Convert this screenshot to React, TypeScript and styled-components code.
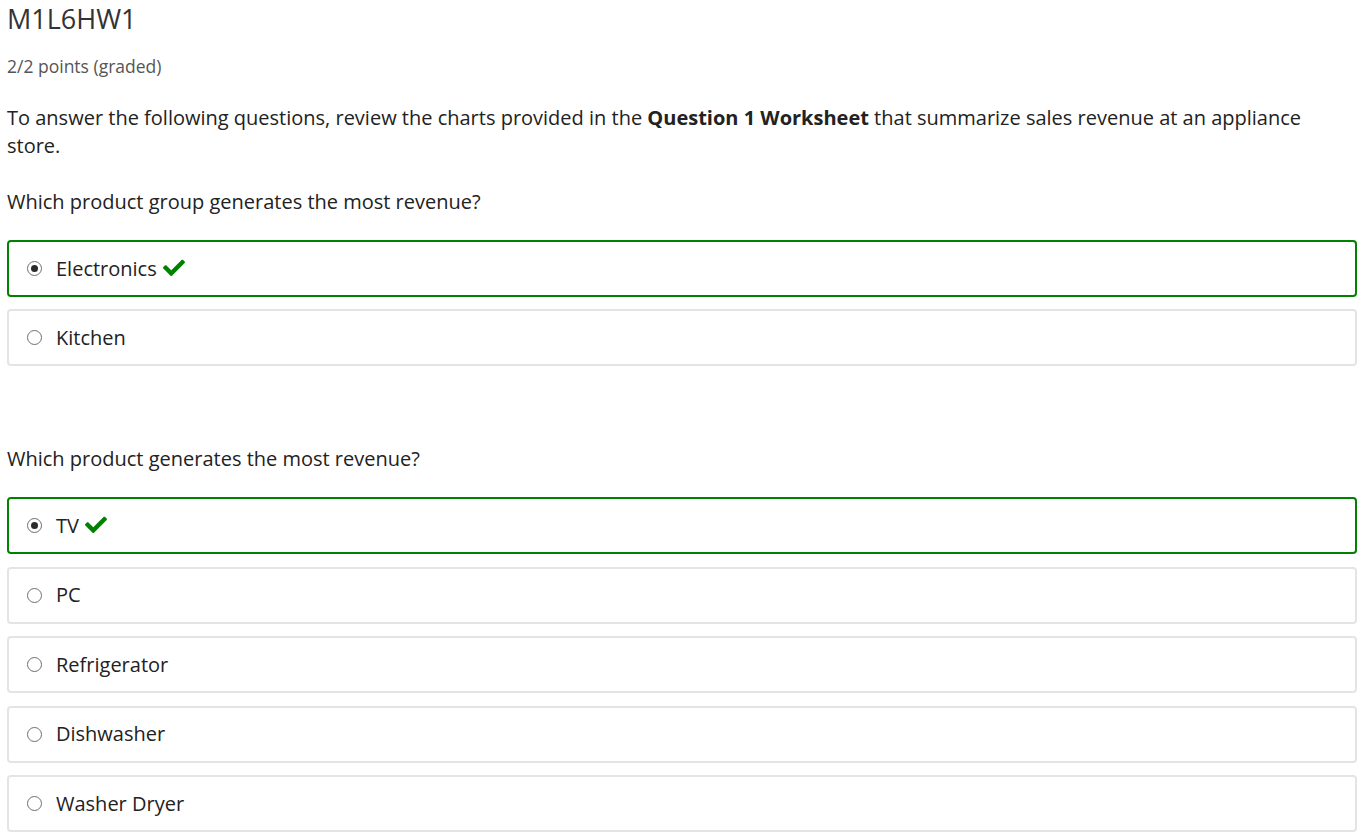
import React from "react";
import styled, { createGlobalStyle } from "styled-components";

const Global = createGlobalStyle`
  html, body { margin: 0; padding: 0; background: #fff; }
  body { font-family: "Open Sans", "Noto Sans", sans-serif; color: #222; }
`;

const Page = styled.div`
  padding: 0 13px 0 7px;
`;

const Title = styled.h2`
  margin: 0;
  padding-top: 2px;
  font-size: 27px;
  line-height: 34px;
  font-weight: 400;
  color: #333;
`;

const Points = styled.div`
  margin-top: 18px;
  font-size: 17.5px;
  line-height: 24px;
  color: #555;
`;

const Prose = styled.p`
  margin: 26px 0 0;
  font-size: 20px;
  line-height: 28px;
  color: #222;
  b { font-weight: 700; }
`;

const Question = styled.p<{ $top: number }>`
  margin: ${(p) => p.$top}px 0 0;
  font-size: 20px;
  line-height: 28px;
  color: #222;
`;

const Options = styled.div<{ $gap: number }>`
  margin-top: 24px;
  display: flex;
  flex-direction: column;
  gap: ${(p) => p.$gap}px;
`;

const Option = styled.label<{ $correct?: boolean }>`
  box-sizing: border-box;
  height: 57px;
  display: flex;
  align-items: center;
  padding-left: 18px;
  border: 2px solid ${(p) => (p.$correct ? "#008100" : "#e4e4e4")};
  border-radius: 4px;
  font-size: 20px;
  color: #222;
`;

const Radio = styled.span<{ $checked?: boolean }>`
  box-sizing: border-box;
  width: 15px;
  height: 15px;
  border-radius: 50%;
  border: 1.5px solid #6e6e6e;
  background: #fff;
  display: flex;
  align-items: center;
  justify-content: center;
  margin-right: 14px;
  flex: none;
  &::after {
    content: "";
    display: ${(p) => (p.$checked ? "block" : "none")};
    width: 7px;
    height: 7px;
    border-radius: 50%;
    background: #2a2a2a;
  }
`;

const Label = styled.span`
  line-height: 28px;
`;

const Check = styled.svg`
  width: 22px;
  height: 18px;
  margin-left: 6px;
  margin-top: -2px;
  fill: #008100;
`;

const CheckIcon = () => (
  <Check viewBox="0 0 512 420">
    <path
      transform="translate(0,-50)"
      d="M173.898 439.404l-166.4-166.4c-9.997-9.997-9.997-26.206 0-36.204l36.203-36.204c9.997-9.998 26.207-9.998 36.204 0L192 312.69 432.095 72.596c9.997-9.997 26.207-9.997 36.204 0l36.203 36.204c9.997 9.997 9.997 26.206 0 36.204l-294.4 294.401c-9.998 9.997-26.207 9.997-36.204-.001z"
    />
  </Check>
);

type Opt = { label: string; checked?: boolean };

const OptionList = ({ items, gap }: { items: Opt[]; gap: number }) => (
  <Options $gap={gap}>
    {items.map((o) => (
      <Option key={o.label} $correct={o.checked}>
        <Radio $checked={o.checked} />
        <Label>{o.label}</Label>
        {o.checked && <CheckIcon />}
      </Option>
    ))}
  </Options>
);

export default function App() {
  return (
    <>
      <Global />
      <Page>
        <Title>M1L6HW1</Title>
        <Points>2/2 points (graded)</Points>
        <Prose>
          To answer the following questions, review the charts provided in the{" "}
          <b>Question 1 Worksheet</b> that summarize sales revenue at an appliance
          store.
        </Prose>
        <Question $top={28}>Which product group generates the most revenue?</Question>
        <OptionList gap={12} items={[{ label: "Electronics", checked: true }, { label: "Kitchen" }]} />
        <Question $top={79}>Which product generates the most revenue?</Question>
        <OptionList
          gap={12.5}
          items={[
            { label: "TV", checked: true },
            { label: "PC" },
            { label: "Refrigerator" },
            { label: "Dishwasher" },
            { label: "Washer Dryer" },
          ]}
        />
      </Page>
    </>
  );
}
